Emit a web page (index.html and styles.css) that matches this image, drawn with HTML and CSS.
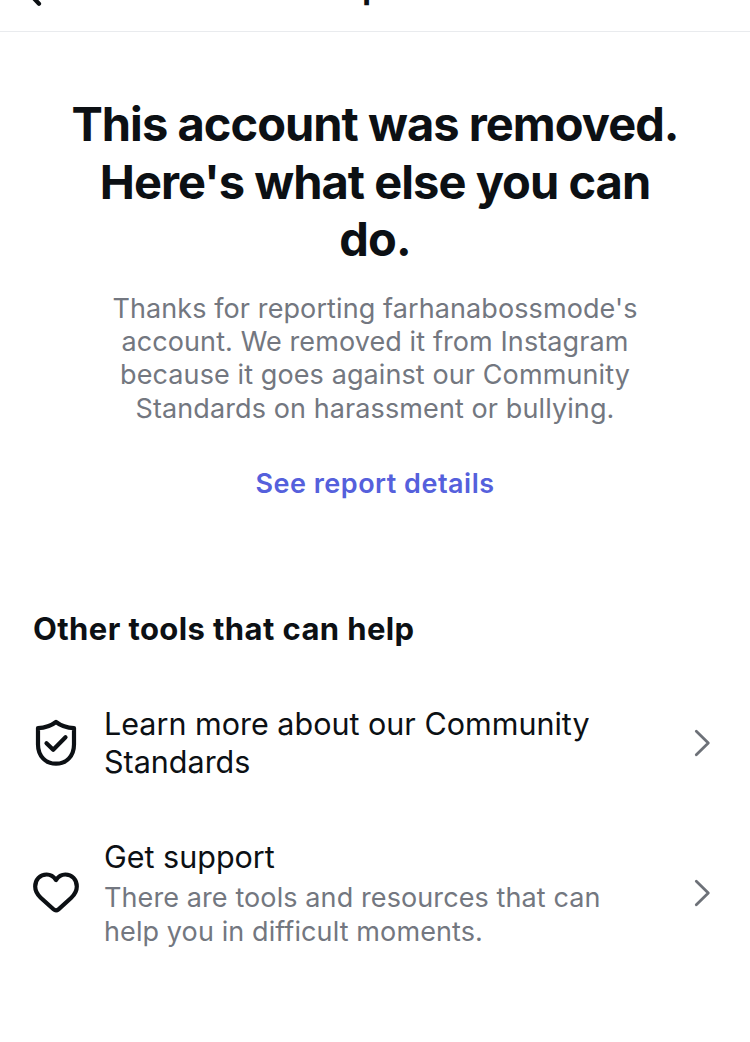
FILE: index.html
```html
<!DOCTYPE html>
<html lang="en">
<head>
  <meta charset="UTF-8">
  <title>Report</title>
  <link rel="stylesheet" href="styles.css">
</head>
<body>
  <header class="topbar">
    <svg class="back" viewBox="0 0 24 31"><path d="M5 -12 L20 3.7" /></svg>
    <span class="topbar-title">Report</span>
  </header>

  <main>
    <section class="intro">
      <h1>This account was removed.<br>Here's what else you can<br>do.</h1>
      <p>Thanks for reporting farhanabossmode's<br>account. We removed it from Instagram<br>because it goes against our Community<br>Standards on harassment or bullying.</p>
      <a class="details" href="#">See report details</a>
    </section>

    <section class="tools">
      <h2>Other tools that can help</h2>
      <a class="tool" href="#">
        <svg class="icon" viewBox="0 0 48 48">
          <path d="M23 3 C18 6.9 12 8.9 5 9.1 V25.5 C5 37.5 13 44.7 23 44.7 C33 44.7 41 37.5 41 25.5 V9.1 C34 8.9 28 6.9 23 3 Z" />
          <path d="M13.5 24.3 L20.2 30.8 L32.5 18.3" />
        </svg>
        <div class="text">
          <div class="name">Learn more about our Community<br>Standards</div>
        </div>
        <svg class="chevron" viewBox="0 0 18 30"><path d="M2.3 3.2 L14.3 15 L2.3 26.8" /></svg>
      </a>
      <a class="tool support" href="#">
        <svg class="icon" viewBox="0 0 48 48">
          <path d="M23 10 C20.5 6.2 17.5 4.5 13.7 4.5 C7 4.5 2.2 9.5 2.2 16.5 C2.2 21 4.3 24.5 7.7 27.7 L20.5 39.3 Q23 41.5 25.5 39.3 L38.3 27.7 C41.7 24.5 43.8 21 43.8 16.5 C43.8 9.5 39 4.5 32.3 4.5 C28.5 4.5 25.5 6.2 23 10 Z" />
        </svg>
        <div class="text">
          <div class="name">Get support</div>
          <div class="desc">There are tools and resources that can<br>help you in difficult moments.</div>
        </div>
        <svg class="chevron" viewBox="0 0 18 30"><path d="M2.3 2.2 L14.3 14 L2.3 25.8" /></svg>
      </a>
    </section>
  </main>
</body>
</html>
```
FILE: styles.css
```css
body {
  margin: 0;
  height: 1042px;
  overflow: hidden;
  background: #fff;
  color: #0c1014;
  font-family: Inter, sans-serif;
}

a {
  color: inherit;
  text-decoration: none;
}

svg {
  flex: none;
  fill: none;
  stroke: #0c1014;
  stroke-width: 4.2;
  stroke-linecap: round;
  stroke-linejoin: round;
}

.topbar {
  display: grid;
  grid-template-columns: 1fr auto 1fr;
  height: 31px;
  padding: 0 19px;
  border-bottom: 1px solid #e9ebee;
  overflow: hidden;
}

.back {
  width: 24px;
  height: 31px;
}

.topbar-title {
  margin-top: -32px;
  font-size: 32px;
  line-height: 40px;
  font-weight: 700;
}

.intro {
  padding-top: 63px;
  text-align: center;
}

h1 {
  margin: 0;
  font-size: 47px;
  line-height: 57.5px;
  font-weight: 700;
  letter-spacing: -0.96px;
}

.intro p {
  margin: 24px 0 0;
  color: #737780;
  font-size: 27px;
  line-height: 33.4px;
  letter-spacing: 0.1px;
}

.details {
  display: block;
  margin-top: 42px;
  color: #5560dc;
  font-size: 27px;
  line-height: 34px;
  font-weight: 600;
  letter-spacing: 0.5px;
}

.tools {
  padding: 108px 38px 0 33px;
}

h2 {
  margin: 0;
  font-size: 31px;
  line-height: 40px;
  letter-spacing: 0.4px;
}

.tool {
  display: flex;
  align-items: center;
  margin-top: 56px;
}

.support {
  margin-top: 57px;
}

.icon {
  width: 48px;
  height: 48px;
}

.text {
  flex: 1;
  margin-left: 23px;
}

.name {
  font-size: 30.5px;
  line-height: 38px;
}

.desc {
  margin-top: 5px;
  color: #737780;
  font-size: 27px;
  line-height: 34px;
  letter-spacing: 0.1px;
}

.chevron {
  width: 18px;
  height: 30px;
  stroke: #6d7178;
  stroke-width: 2.8;
}
```
